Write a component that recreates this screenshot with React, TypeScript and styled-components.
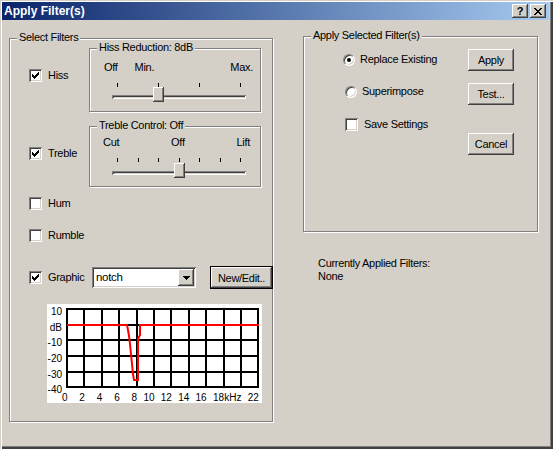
import React from "react";
import styled, { createGlobalStyle, css } from "styled-components";

const GlobalStyle = createGlobalStyle`
  html, body { margin: 0; padding: 0; background: #d4d0c8; }
  #root { width: 553px; height: 449px; overflow: hidden; }
`;

const raised = css`
  background: #d4d0c8;
  box-shadow: inset -1px -1px 0 #404040, inset 1px 1px 0 #ffffff,
    inset -2px -2px 0 #808080, inset 2px 2px 0 #d4d0c8;
`;

const sunken = css`
  box-shadow: inset 1px 1px 0 #808080, inset -1px -1px 0 #ffffff,
    inset 2px 2px 0 #404040, inset -2px -2px 0 #d4d0c8;
`;

const Window = styled.div`
  box-sizing: border-box;
  width: 553px;
  height: 449px;
  padding: 2px 4px 3px 2px;
  background: #d4d0c8;
  box-shadow: inset 1px 1px 0 #d4d0c8, inset 2px 2px 0 #ffffff,
    inset -2px -2px 0 #404040, inset -3px -3px 0 #808080;
  display: flex;
  flex-direction: column;
  font-family: "Liberation Sans", Arial, sans-serif;
  font-size: 11px;
  letter-spacing: -0.3px;
  color: #000;
`;

const TitleBar = styled.div`
  flex: none;
  height: 18px;
  display: flex;
  align-items: center;
  padding: 0 3px 0 2px;
  background: linear-gradient(to right, #0a246a, #a6caf0);
`;

const TitleText = styled.span`
  color: #fff;
  font-weight: bold;
  font-size: 12px;
  letter-spacing: 0;
  line-height: 18px;
`;

const CaptionButtons = styled.div`
  margin-left: auto;
  display: flex;
  gap: 2px;
`;

const CaptionButton = styled.div`
  ${raised};
  box-sizing: border-box;
  width: 16px;
  height: 14px;
  display: flex;
  align-items: center;
  justify-content: center;
  font-weight: bold;
  font-size: 11px;
  line-height: 14px;
  letter-spacing: 0;
  color: #000;
`;

const Body = styled.div`
  flex: 1;
  display: flex;
  align-items: flex-start;
  padding-left: 7px;
`;

const GroupBox = styled.div<{ $w: number; $h: number; $mt?: number }>`
  position: relative;
  flex: none;
  box-sizing: border-box;
  width: ${(p) => p.$w}px;
  height: ${(p) => p.$h}px;
  margin-top: ${(p) => p.$mt ?? 0}px;
  border: 1px solid #808080;
  box-shadow: inset 1px 1px 0 #ffffff, 1px 1px 0 #ffffff;
`;

const GroupLabel = styled.span`
  position: absolute;
  left: 7px;
  top: -8px;
  padding: 0 2px;
  line-height: 13px;
  background: #d4d0c8;
  white-space: nowrap;
`;

const FilterList = styled.div`
  display: flex;
  flex-direction: column;
  padding: 9px 0 0 19px;
`;

const FilterRow = styled.div<{ $mt?: number; $center?: boolean }>`
  display: flex;
  align-items: ${(p) => (p.$center ? "center" : "flex-start")};
  margin-top: ${(p) => p.$mt ?? 0}px;
`;

const CheckCell = styled.label<{ $w?: number; $mt?: number }>`
  display: flex;
  align-items: center;
  gap: 6px;
  flex: none;
  width: ${(p) => (p.$w ? `${p.$w}px` : "auto")};
  height: 13px;
  line-height: 13px;
  margin-top: ${(p) => p.$mt ?? 0}px;
  white-space: nowrap;
`;

const BoxFrame = styled.span`
  ${sunken};
  flex: none;
  box-sizing: border-box;
  width: 13px;
  height: 13px;
  background: #fff;
  display: inline-flex;
  align-items: center;
  justify-content: center;
`;

const RadioFrame = styled.span<{ $on?: boolean }>`
  position: relative;
  flex: none;
  box-sizing: border-box;
  width: 12px;
  height: 12px;
  border-radius: 50%;
  background: #fff;
  border: 1px solid;
  border-color: #808080 #ffffff #ffffff #808080;
  box-shadow: inset 1px 1px 0 #404040, inset -1px -1px 0 #d4d0c8;
  ${(p) =>
    p.$on &&
    css`
      &::after {
        content: "";
        position: absolute;
        left: 3px;
        top: 3px;
        width: 4px;
        height: 4px;
        border-radius: 50%;
        background: #000;
      }
    `}
`;

const ScaleBody = styled.div<{ $pt: number }>`
  padding-top: ${(p) => p.$pt}px;
`;

const ScaleLabels = styled.div<{ $pl: number; $pr: number }>`
  display: flex;
  line-height: 13px;
  height: 13px;
  padding: 0 ${(p) => p.$pr}px 0 ${(p) => p.$pl}px;
  white-space: nowrap;
`;

const ScaleLabel = styled.span<{ $ml?: string }>`
  margin-left: ${(p) => p.$ml ?? "0"};
`;

const Scale = styled.div`
  position: relative;
  width: 134px;
  margin: 9px 0 0 22px;
`;

const Ticks = styled.div<{ $gapBelow: number }>`
  display: flex;
  justify-content: space-between;
  height: 4px;
  padding: 0 5px;
  margin-bottom: ${(p) => p.$gapBelow}px;
`;

const Tick = styled.span`
  width: 1px;
  height: 4px;
  background: #000;
`;

const TrackArea = styled.div`
  position: relative;
  height: 15px;
  padding-top: 8px;
  box-sizing: border-box;
`;

const Track = styled.div`
  ${sunken};
  height: 4px;
  background: #d4d0c8;
`;

const Thumb = styled.div`
  ${raised};
  position: absolute;
  top: 0;
  width: 11px;
  height: 15px;
`;

const Combo = styled.div`
  ${sunken};
  flex: none;
  box-sizing: border-box;
  width: 104px;
  height: 21px;
  padding: 2px;
  background: #fff;
  display: flex;
  align-items: center;
`;

const ComboText = styled.span`
  flex: 1;
  padding-left: 2px;
  line-height: 17px;
  font-size: 11.5px;
`;

const ComboButton = styled.span`
  ${raised};
  width: 16px;
  height: 17px;
  display: flex;
  align-items: center;
  justify-content: center;
`;

const PushButton = styled.button<{ $w: number; $h: number; $default?: boolean; $ml?: number; $mt?: number }>`
  ${raised};
  box-sizing: border-box;
  flex: none;
  width: ${(p) => p.$w}px;
  height: ${(p) => p.$h}px;
  margin: ${(p) => p.$mt ?? 0}px 0 0 ${(p) => p.$ml ?? 0}px;
  padding: 0;
  border: ${(p) => (p.$default ? "1px solid #000" : "none")};
  font: inherit;
  letter-spacing: inherit;
  color: #000;
  display: flex;
  align-items: center;
  justify-content: center;
`;

const GraphBox = styled.div`
  margin: 15px 0 0 18px;
  width: 215px;
  height: 99px;
`;

const GraphSvg = styled.svg`
  display: block;
  font-family: "Liberation Sans", Arial, sans-serif;
  font-size: 10px;
  letter-spacing: 0;
`;

const RightColumn = styled.div`
  display: flex;
  flex-direction: column;
  margin: 16px 0 0 30px;
`;

const GroupContent = styled.div`
  display: flex;
  height: 100%;
`;

const Options = styled.div`
  display: flex;
  flex-direction: column;
  padding: 16px 0 0 39px;
`;

const OptionRow = styled.label<{ $mt?: number; $ml?: number; $gap: number }>`
  display: flex;
  align-items: center;
  gap: ${(p) => p.$gap}px;
  height: 13px;
  line-height: 13px;
  margin: ${(p) => p.$mt ?? 0}px 0 0 ${(p) => p.$ml ?? 0}px;
  white-space: nowrap;
`;

const ButtonColumn = styled.div`
  display: flex;
  flex-direction: column;
  margin: 0 23px 0 auto;
  padding-top: 12px;
`;

const Info = styled.div`
  margin-top: 25px;
  padding-left: 15px;
  line-height: 13px;
`;

const CheckGlyph = () => (
  <svg width="7" height="7" viewBox="0 0 7 7" shapeRendering="crispEdges">
    <path
      fill="#000"
      d="M6 0h1v1h-1z M5 1h2v1h-2z M0 2h1v1h-1z M4 2h3v1h-3z M0 3h2v1h-2z M3 3h3v1h-3z M0 4h5v1h-5z M1 5h3v1h-3z M2 6h1v1h-1z"
    />
  </svg>
);

const CloseGlyph = () => (
  <svg width="8" height="7" viewBox="0 0 8 7" shapeRendering="crispEdges">
    <path
      fill="#000"
      d="M0 0h2v1h-2z M6 0h2v1h-2z M1 1h2v1h-2z M5 1h2v1h-2z M2 2h4v1h-4z M3 3h2v1h-2z M2 4h4v1h-4z M1 5h2v1h-2z M5 5h2v1h-2z M0 6h2v1h-2z M6 6h2v1h-2z"
    />
  </svg>
);

const ArrowGlyph = () => (
  <svg width="7" height="4" viewBox="0 0 7 4" shapeRendering="crispEdges">
    <path fill="#000" d="M0 0h7v1h-7z M1 1h5v1h-5z M2 2h3v1h-3z M3 3h1v1h-1z" />
  </svg>
);

function CheckBox({ checked }: { checked?: boolean }) {
  return <BoxFrame>{checked && <CheckGlyph />}</BoxFrame>;
}

function Slider({
  ticks,
  value,
  gapBelow,
}: {
  ticks: number;
  value: number;
  gapBelow: number;
}) {
  return (
    <Scale>
      <Ticks $gapBelow={gapBelow}>
        {Array.from({ length: ticks }, (_, i) => (
          <Tick key={i} />
        ))}
      </Ticks>
      <TrackArea>
        <Track />
        <Thumb style={{ left: Math.round(value * 123) }} />
      </TrackArea>
    </Scale>
  );
}

const GRID_X = Array.from({ length: 12 }, (_, i) => 20 + i * 17.4);
const GRID_Y = Array.from({ length: 6 }, (_, j) => 5 + j * 15.65);
const X_LABELS = ["0", "2", "4", "6", "8", "10", "12", "14", "16", "18", "kHz", "22"];
const Y_LABELS = ["10", "dB", "-10", "-20", "-30", "-40"];

function Graph() {
  return (
    <GraphBox>
      <GraphSvg width={215} height={99} viewBox="0 0 215 99">
        <rect width="215" height="99" fill="#fff" />
        <g shapeRendering="crispEdges" fill="#000">
          {GRID_X.map((x, i) => (
            <rect key={`v${i}`} x={Math.round(x - 1)} y={4} width={2} height={80} />
          ))}
          {GRID_Y.map((y, j) => (
            <rect key={`h${j}`} x={19} y={Math.round(y - 1)} width={193} height={2} />
          ))}
        </g>
        <path
          d="M20 21H80L81 26L82 32L83 40L84 50L85 60L86 70L87 76H91V35L93 31V21H212"
          stroke="#ff0000"
          strokeWidth={2}
          fill="none"
        />
        {Y_LABELS.map((t, j) => (
          <text key={t} x={15} y={GRID_Y[j] + 6} textAnchor="end">
            {t}
          </text>
        ))}
        {X_LABELS.map((t, i) => (
          <text key={t} x={GRID_X[i] + 0.5} y={97} textAnchor="end">
            {t}
          </text>
        ))}
      </GraphSvg>
    </GraphBox>
  );
}

export default function App() {
  return (
    <>
      <GlobalStyle />
      <Window>
        <TitleBar>
          <TitleText>Apply Filter(s)</TitleText>
          <CaptionButtons>
            <CaptionButton>?</CaptionButton>
            <CaptionButton>
              <CloseGlyph />
            </CaptionButton>
          </CaptionButtons>
        </TitleBar>
        <Body>
          <GroupBox $w={264} $h={384} $mt={18}>
            <GroupLabel>Select Filters</GroupLabel>
            <FilterList>
              <FilterRow>
                <CheckCell $w={60} $mt={21}>
                  <CheckBox checked />
                  Hiss
                </CheckCell>
                <GroupBox $w={172} $h={64}>
                  <GroupLabel>Hiss Reduction: 8dB</GroupLabel>
                  <ScaleBody $pt={12}>
                    <ScaleLabels $pl={14} $pr={7}>
                      <ScaleLabel>Off</ScaleLabel>
                      <ScaleLabel $ml="17px">Min.</ScaleLabel>
                      <ScaleLabel $ml="auto">Max.</ScaleLabel>
                    </ScaleLabels>
                    <Slider ticks={4} value={1 / 3} gapBelow={0} />
                  </ScaleBody>
                </GroupBox>
              </FilterRow>
              <FilterRow $mt={14}>
                <CheckCell $w={60} $mt={21}>
                  <CheckBox checked />
                  Treble
                </CheckCell>
                <GroupBox $w={172} $h={61}>
                  <GroupLabel>Treble Control: Off</GroupLabel>
                  <ScaleBody $pt={9}>
                    <ScaleLabels $pl={13} $pr={10}>
                      <ScaleLabel>Cut</ScaleLabel>
                      <ScaleLabel $ml="auto">Off</ScaleLabel>
                      <ScaleLabel $ml="auto">Lift</ScaleLabel>
                    </ScaleLabels>
                    <Slider ticks={7} value={0.5} gapBelow={1} />
                  </ScaleBody>
                </GroupBox>
              </FilterRow>
              <FilterRow $mt={10}>
                <CheckCell>
                  <CheckBox />
                  Hum
                </CheckCell>
              </FilterRow>
              <FilterRow $mt={19}>
                <CheckCell>
                  <CheckBox />
                  Rumble
                </CheckCell>
              </FilterRow>
              <FilterRow $mt={24} $center>
                <CheckCell $w={63}>
                  <CheckBox checked />
                  Graphic
                </CheckCell>
                <Combo>
                  <ComboText>notch</ComboText>
                  <ComboButton>
                    <ArrowGlyph />
                  </ComboButton>
                </Combo>
                <PushButton $w={63} $h={23} $default $ml={14}>
                  New/Edit..
                </PushButton>
              </FilterRow>
              <Graph />
            </FilterList>
          </GroupBox>
          <RightColumn>
            <GroupBox $w={235} $h={196}>
              <GroupLabel>Apply Selected Filter(s)</GroupLabel>
              <GroupContent>
                <Options>
                  <OptionRow $gap={5}>
                    <RadioFrame $on />
                    Replace Existing
                  </OptionRow>
                  <OptionRow $gap={5} $mt={19} $ml={2}>
                    <RadioFrame />
                    Superimpose
                  </OptionRow>
                  <OptionRow $gap={6} $mt={20} $ml={2}>
                    <CheckBox />
                    Save Settings
                  </OptionRow>
                </Options>
                <ButtonColumn>
                  <PushButton $w={46} $h={22}>
                    Apply
                  </PushButton>
                  <PushButton $w={46} $h={22} $mt={12}>
                    Test...
                  </PushButton>
                  <PushButton $w={46} $h={22} $mt={28}>
                    Cancel
                  </PushButton>
                </ButtonColumn>
              </GroupContent>
            </GroupBox>
            <Info>
              Currently Applied Filters:
              <br />
              None
            </Info>
          </RightColumn>
        </Body>
      </Window>
    </>
  );
}
